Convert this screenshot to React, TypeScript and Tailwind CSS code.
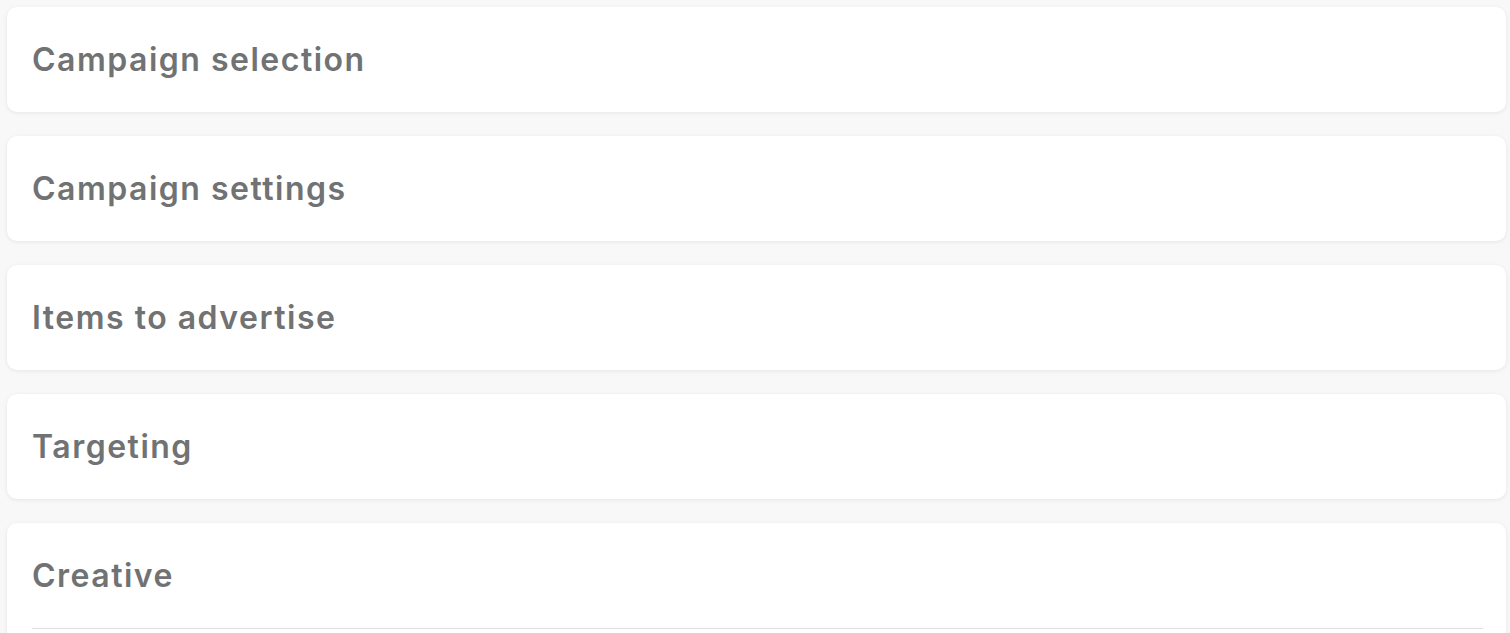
const sections = [
  { title: 'Campaign selection' },
  { title: 'Campaign settings' },
  { title: 'Items to advertise' },
  { title: 'Targeting' },
  { title: 'Creative', open: true },
]

export default function App() {
  return (
    <div className="min-h-screen bg-[#f8f8f8] pl-[7px] pr-[4px] pt-[7px] flex flex-col gap-6 font-['Inter',sans-serif]">
      {sections.map((s) => (
        <div
          key={s.title}
          className="bg-white rounded-[10px] shadow-[0_1px_4px_rgba(0,0,0,0.08)]"
        >
          <div className="h-[105px] flex items-center px-[25px]">
            <h2 className="text-[32px] font-semibold text-[#707273] tracking-[1.5px]">
              {s.title}
            </h2>
          </div>
          {s.open && (
            <div className="ml-[25px] mr-[23px] border-t border-[#e0e0e0] h-40" />
          )}
        </div>
      ))}
    </div>
  )
}
